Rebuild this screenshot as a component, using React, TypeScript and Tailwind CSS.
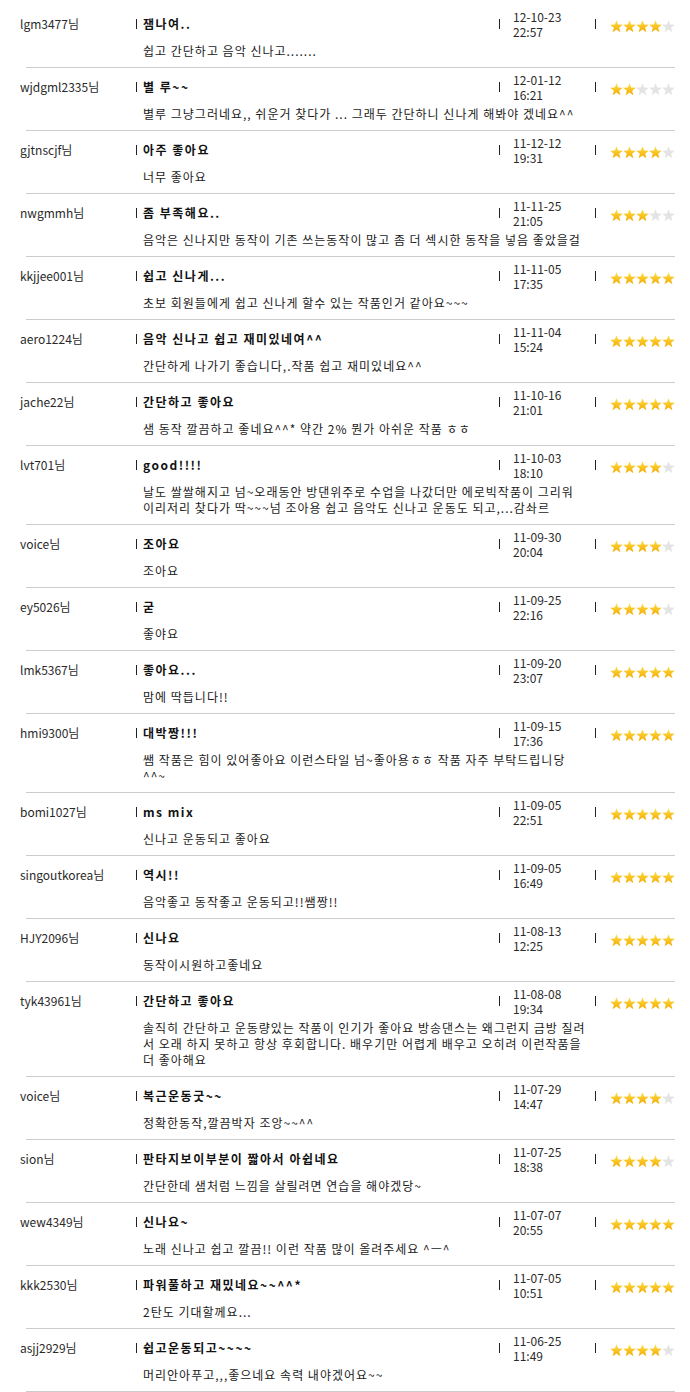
import React from "react";

type Review = {
  name: string;
  title: string;
  date: string;
  time: string;
  stars: number;
  body: string[];
};

const reviews: Review[] = [
  { name: "lgm3477님", title: "잼나여..", date: "12-10-23", time: "22:57", stars: 4, body: ["쉽고 간단하고 음악 신나고......."] },
  { name: "wjdgml2335님", title: "별 루~~", date: "12-01-12", time: "16:21", stars: 2, body: ["별루 그냥그러네요,, 쉬운거 찾다가 ... 그래두 간단하니 신나게 해봐야 겠네요^^"] },
  { name: "gjtnscjf님", title: "아주 좋아요", date: "11-12-12", time: "19:31", stars: 4, body: ["너무 좋아요"] },
  { name: "nwgmmh님", title: "좀 부족해요..", date: "11-11-25", time: "21:05", stars: 3, body: ["음악은 신나지만 동작이 기존 쓰는동작이 많고 좀 더 섹시한 동작을 넣음 좋았을걸"] },
  { name: "kkjjee001님", title: "쉽고 신나게...", date: "11-11-05", time: "17:35", stars: 5, body: ["초보 회원들에게 쉽고 신나게 할수 있는 작품인거 같아요~~~"] },
  { name: "aero1224님", title: "음악 신나고 쉽고 재미있네여^^", date: "11-11-04", time: "15:24", stars: 5, body: ["간단하게 나가기 좋습니다,.작품 쉽고 재미있네요^^"] },
  { name: "jache22님", title: "간단하고 좋아요", date: "11-10-16", time: "21:01", stars: 5, body: ["샘 동작 깔끔하고 좋네요^^* 약간 2% 뭔가 아쉬운 작품 ㅎㅎ"] },
  { name: "lvt701님", title: "good!!!!", date: "11-10-03", time: "18:10", stars: 4, body: ["날도 쌀쌀해지고 넘~오래동안 방댄위주로 수업을 나갔더만 에로빅작품이 그리워", "이리저리 찾다가 딱~~~넘 조아용 쉽고 음악도 신나고 운동도 되고,...감솨르"] },
  { name: "voice님", title: "조아요", date: "11-09-30", time: "20:04", stars: 4, body: ["조아요"] },
  { name: "ey5026님", title: "굳", date: "11-09-25", time: "22:16", stars: 4, body: ["좋야요"] },
  { name: "lmk5367님", title: "좋아요...", date: "11-09-20", time: "23:07", stars: 5, body: ["맘에 딱듭니다!!"] },
  { name: "hmi9300님", title: "대박짱!!!", date: "11-09-15", time: "17:36", stars: 5, body: ["쌤 작품은 힘이 있어좋아요 이런스타일 넘~좋아용ㅎㅎ 작품 자주 부탁드립니당", "^^~"] },
  { name: "bomi1027님", title: "ms mix", date: "11-09-05", time: "22:51", stars: 5, body: ["신나고 운동되고 좋아요"] },
  { name: "singoutkorea님", title: "역시!!", date: "11-09-05", time: "16:49", stars: 5, body: ["음악좋고 동작좋고 운동되고!!쌤짱!!"] },
  { name: "HJY2096님", title: "신나요", date: "11-08-13", time: "12:25", stars: 5, body: ["동작이시원하고좋네요"] },
  { name: "tyk43961님", title: "간단하고 좋아요", date: "11-08-08", time: "19:34", stars: 5, body: ["솔직히 간단하고 운동량있는 작품이 인기가 좋아요 방송댄스는 왜그런지 금방 질려", "서 오래 하지 못하고 항상 후회합니다. 배우기만 어렵게 배우고 오히려 이런작품을", "더 좋아해요"] },
  { name: "voice님", title: "복근운동굿~~", date: "11-07-29", time: "14:47", stars: 4, body: ["정확한동작,깔끔박자 조앙~~^^"] },
  { name: "sion님", title: "판타지보이부분이 짧아서 아쉽네요", date: "11-07-25", time: "18:38", stars: 4, body: ["간단한데 샘처럼 느낌을 살릴려면 연습을 해야겠당~"] },
  { name: "wew4349님", title: "신나요~", date: "11-07-07", time: "20:55", stars: 5, body: ["노래 신나고 쉽고 깔끔!! 이런 작품 많이 올려주세요 ^ㅡ^"] },
  { name: "kkk2530님", title: "파워풀하고 재밌네요~~^^*", date: "11-07-05", time: "10:51", stars: 5, body: ["2탄도 기대할께요..."] },
  { name: "asjj2929님", title: "쉽고운동되고~~~~", date: "11-06-25", time: "11:49", stars: 4, body: ["머리안아푸고,,,좋으네요 속력 내야겠어요~~"] },
];

const STAR_PATH =
  "M6.5 0.2 L8.15 4.53 L12.78 4.76 L9.16 7.67 L10.38 12.14 L6.5 9.6 L2.62 12.14 L3.84 7.67 L0.22 4.76 L4.85 4.53 Z";

function Star({ filled, id }: { filled: boolean; id: string }) {
  return (
    <svg width="13" height="13" viewBox="0 0 13 13" className="block">
      <defs>
        <linearGradient id={id} x1="0" y1="0" x2="0" y2="1">
          <stop offset="0" stopColor="#ffe14a" />
          <stop offset="1" stopColor="#f3aa00" />
        </linearGradient>
      </defs>
      <path d={STAR_PATH} fill={filled ? `url(#${id})` : "#e4e4e4"} />
    </svg>
  );
}

function Sep() {
  return <span className="block w-px h-[10px] bg-[#222]" />;
}

export default function App() {
  return (
    <div
      className="w-[690px] bg-white pt-[5px] text-[12px] text-[#1a1a1a]"
      style={{ fontFamily: '"Noto Sans CJK KR", "Noto Sans", sans-serif' }}
    >
      {reviews.map((r, ri) => (
        <div key={ri}>
          <div className="flex h-[38px] items-center">
            <div className="w-[136px] pl-[20px] whitespace-nowrap text-[#2a2a2a] leading-[16px]">{r.name}</div>
            <Sep />
            <div className="w-[362px] pl-[6px] font-bold whitespace-nowrap leading-[16px] tracking-[1.5px] text-[#111]">
              {r.title}
            </div>
            <Sep />
            <div className="w-[95px] pl-[13px] leading-[15px] text-[#2a2a2a]">
              <div>{r.date}</div>
              <div>{r.time}</div>
            </div>
            <Sep />
            <div className="flex pl-[14px] pt-[4px]">
              {[0, 1, 2, 3, 4].map((i) => (
                <Star key={i} filled={i < r.stars} id={`g${ri}-${i}`} />
              ))}
            </div>
          </div>
          <div className="pl-[143px] pb-[8px] leading-[16px] tracking-[1px] text-[#1a1a1a]">
            {r.body.map((line, li) => (
              <div key={li} className="whitespace-nowrap h-[16px]">
                {line}
              </div>
            ))}
          </div>
          <div className="ml-[26px] w-[649px] h-px bg-[#cccccc]" />
        </div>
      ))}
    </div>
  );
}
